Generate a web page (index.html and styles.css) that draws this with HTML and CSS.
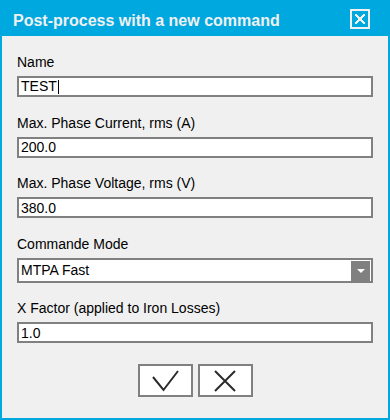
FILE: index.html
```html
<!DOCTYPE html>
<html lang="en">
<head>
    <meta charset="UTF-8" />
    <meta name="viewport" content="width=device-width, initial-scale=1.0"/>
    <title>Post-process with a new command</title>
    <link rel="stylesheet" href="styles.css">
</head>
<body>

<div class="dialog">
    <div class="title-bar">
        <h2 class="title">Post-process with a new command</h2>
        <button class="close-btn" type="button" aria-label="Close">
            <svg width="10" height="10" viewBox="0 0 10 10" shape-rendering="crispEdges">
                <path d="M0 0h2v1h1v1h1v1h2v-1h1v-1h1v-1h2v2h-1v1h-1v1h-1v2h1v1h1v1h1v2h-2v-1h-1v-1h-1v-1h-2v1h-1v1h-1v1h-2v-2h1v-1h1v-1h1v-2h-1v-1h-1v-1h-1z" fill="#f0f0f0"/>
            </svg>
        </button>
    </div>

    <form class="content" id="postForm">
        <div class="form-group">
            <label>Name</label>
            <div class="field"><span>TEST</span><span class="caret"></span></div>
        </div>

        <div class="form-group">
            <label for="current">Max. Phase Current, rms (A)</label>
            <input type="text" id="current" value="200.0" />
        </div>

        <div class="form-group">
            <label for="voltage">Max. Phase Voltage, rms (V)</label>
            <input type="text" id="voltage" value="380.0" />
        </div>

        <div class="form-group">
            <label>Commande Mode</label>
            <div class="select">
                <span class="select-value">MTPA Fast</span>
                <span class="select-arrow"><span class="triangle"></span></span>
            </div>
        </div>

        <div class="form-group">
            <label for="xfactor">X Factor (applied to Iron Losses)</label>
            <input type="text" id="xfactor" value="1.0" />
        </div>

        <div class="actions">
            <button type="submit" class="action-btn" aria-label="OK">
                <svg width="27" height="22" viewBox="0 0 27 22">
                    <polyline points="1,7 11.5,20 26,1" fill="none" stroke="#2b2b2b" stroke-width="2"/>
                </svg>
            </button>
            <button type="button" class="action-btn" aria-label="Cancel">
                <svg width="22" height="22" viewBox="0 0 22 22">
                    <path d="M1 1L21 21M21 1L1 21" fill="none" stroke="#2b2b2b" stroke-width="2"/>
                </svg>
            </button>
        </div>
    </form>
</div>

</body>
</html>
```

FILE: styles.css
```css
* {
    box-sizing: border-box;
}

body {
    margin: 0;
    padding: 0;
    font-family: 'Liberation Sans', Arial, sans-serif;
}

.dialog {
    width: 390px;
    height: 420px;
    background-color: #00a8e0;
    padding: 0 2px 2px;
    display: flex;
    flex-direction: column;
}

.title-bar {
    height: 36px;
    display: flex;
    align-items: flex-start;
    justify-content: space-between;
    padding: 0 18px 0 11px;
}

.title {
    margin: 0;
    padding-top: 12px;
    font-size: 16px;
    line-height: 18px;
    font-weight: bold;
    color: #f0f0f0;
}

.close-btn {
    margin-top: 9px;
    width: 20px;
    height: 20px;
    padding: 0;
    border: 2px solid #f0f0f0;
    background: transparent;
    display: flex;
    align-items: center;
    justify-content: center;
}

.content {
    flex: 1;
    background-color: #f0f0f0;
    padding: 18px 15px 21px;
    display: flex;
    flex-direction: column;
    gap: 17.5px;
}

.form-group {
    display: flex;
    flex-direction: column;
}

label {
    font-size: 14px;
    line-height: 16px;
    color: #000000;
    margin-bottom: 6px;
}

input[type="text"],
.field {
    width: 100%;
    height: 21px;
    margin: 0;
    padding: 0 2px;
    border: 2px solid #808080;
    border-radius: 0;
    background-color: #ffffff;
    font-family: inherit;
    font-size: 14px;
    line-height: 17px;
    color: #000000;
    outline: none;
}

.field {
    display: flex;
    align-items: center;
}

.caret {
    display: inline-block;
    width: 1px;
    height: 14px;
    margin-left: 1px;
    background-color: #000000;
}

.select {
    display: flex;
    height: 25px;
    border: 2px solid #808080;
    background-color: #ffffff;
    font-size: 14px;
    line-height: 21px;
    padding-left: 2px;
}

.select-value {
    flex: 1;
}

.select-arrow {
    width: 19px;
    height: 20px;
    margin: 1px 1px 0 0;
    background-color: #808080;
    display: flex;
    align-items: center;
    justify-content: center;
}

.triangle {
    width: 0;
    height: 0;
    border-top: 4px solid #ffffff;
    border-left: 4px solid transparent;
    border-right: 4px solid transparent;
    margin-top: 1px;
}

.actions {
    margin-top: 3.5px;
    display: flex;
    justify-content: center;
    gap: 5px;
}

.action-btn {
    width: 55px;
    height: 33px;
    padding: 0;
    border: 2px solid #808080;
    background-color: #ffffff;
    display: flex;
    align-items: center;
    justify-content: center;
    cursor: pointer;
}
```
